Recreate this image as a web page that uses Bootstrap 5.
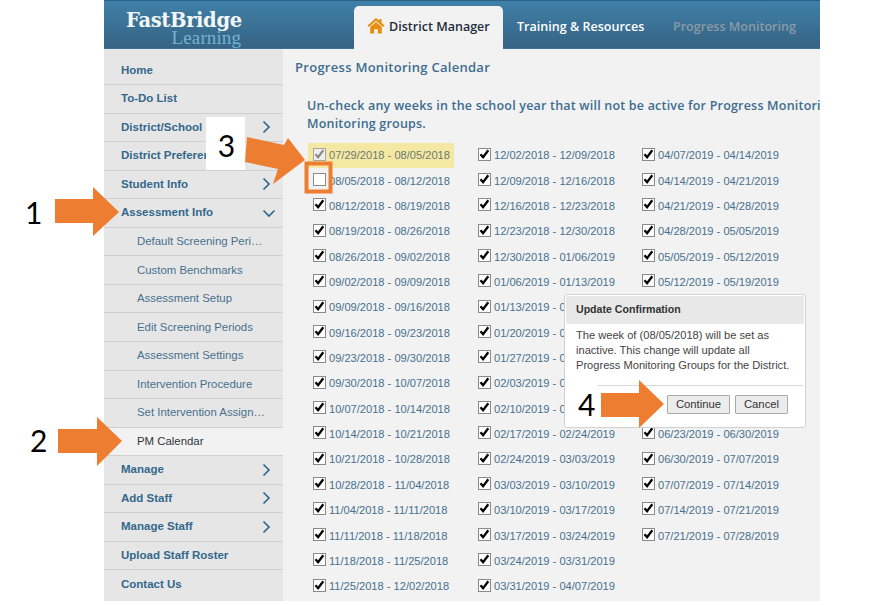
<!DOCTYPE html>
<html lang="en">
<head>
<meta charset="utf-8">
<title>Progress Monitoring Calendar</title>
<link href="https://cdn.jsdelivr.net/npm/bootstrap@5.3.0/dist/css/bootstrap.min.css" rel="stylesheet">
<style>
html,body{background:#fff;margin:0;height:605px;overflow:hidden}
body{font-family:"Liberation Sans",Arial,sans-serif}
.stage{position:relative;width:872px;height:605px;overflow:hidden}
.frame{width:716px;height:601px;margin-left:104px;overflow:hidden;background:#f2f2f2}
.topbar{height:49px;background:linear-gradient(#3f80a8,#366383);border-top:1px solid #2d5f82;border-bottom:1px solid #3b7398}
.logo{width:250px;padding:10px 0 0 22px;line-height:1}
.logo-a{font-family:"DejaVu Serif",serif;font-weight:700;font-size:19.5px;color:#f4f6f7;height:17px;letter-spacing:-.35px;white-space:nowrap}
.logo-b{font-family:"Liberation Serif",serif;font-size:19px;color:#74b2d2;text-align:right;width:115px;letter-spacing:.1px}
.tab-item{font-family:"Open Sans",sans-serif;font-weight:600;font-size:12.5px;letter-spacing:.02px;color:#fff;padding:0 13px;height:42px;margin-top:5px;white-space:nowrap}
.tab-on{background:#f2f2f2;color:#1f2d3d;border-radius:5px 5px 0 0;height:43px;width:149px;flex:none}
.tab-off{color:#8b9aa6;padding-left:14px}
.tab-train{padding-left:14px;width:156px;flex:none}
.house{width:18px;height:17px;margin-right:4px;margin-top:-4px;flex:none}
.sidebar{width:179px;height:552px;background:#e6e6e6;padding-top:7.5px;flex:none}
.navrow{height:28.56px;border-bottom:1.5px solid #cfcfcf;padding:0 13px 0 17px;color:#33688c;font-size:11.5px;font-weight:700;white-space:nowrap}
.navrow:last-child{border-bottom:0}
.navsub{padding-left:33px;font-weight:400;font-size:11.4px;color:#47708e}
.navcur{background:#f2f2f2;color:#2f3640}
.chev{width:9px;height:14px;flex:none;margin-right:-1px}
.chev-d{width:14px;height:9px;margin-right:-6px}
.content{flex:1;padding:0 12px;min-width:0;position:relative}
.title{font-family:"Open Sans",sans-serif;font-weight:600;font-size:13px;color:#3d6d8f;letter-spacing:.28px;margin:9px 0 0;line-height:18px;white-space:nowrap}
.lede{font-family:"Open Sans",sans-serif;font-weight:600;font-size:12.5px;color:#3d6d8f;letter-spacing:.2px;line-height:18px;margin:21px 0 0 12px;width:513px;white-space:nowrap;overflow:hidden}
.weeks{display:grid;grid-auto-flow:column;grid-template-rows:repeat(18,25.35px);grid-template-columns:165px 164px 150px;margin:10px 0 0 13px;white-space:nowrap}
.wk{font-size:11.1px;color:#47708e;height:25.35px;display:flex;align-items:center;gap:3px;padding-left:5px}
.wk-hl{background:#f5e8a3;width:146px;height:25px;color:#6a7a72}
.cb{appearance:none;width:13px;height:13px;margin:-3px 0 0;flex:none;border:1px solid #8a8a8a;background:#fff;border-radius:0;position:relative}
.cb-on{background:#fff url("data:image/svg+xml,%3Csvg xmlns='http://www.w3.org/2000/svg' viewBox='0 0 13 13'%3E%3Cpath d='M2.5 6.2l2.6 3 5.2-7' fill='none' stroke='%23000' stroke-width='2.3'/%3E%3C/svg%3E") center/13px no-repeat}
.cb-dis{border-color:#a6a6a6;background:#eee url("data:image/svg+xml,%3Csvg xmlns='http://www.w3.org/2000/svg' viewBox='0 0 13 13'%3E%3Cpath d='M2.5 6.2l2.6 3 5.2-7' fill='none' stroke='%23888' stroke-width='2.1'/%3E%3C/svg%3E") center/13px no-repeat}
.dialog{position:absolute;left:564px;top:294px;width:242px;height:134px;background:#fff;border:1px solid #d2d2d2;border-radius:3px;padding:1px}
.dlg-head{height:28px;background:#e8e8e8;border-radius:2px;padding:0 10px;font-weight:700;color:#333;font-size:10.6px}
.dlg-body{padding:4px 10px 0;font-size:11.1px;line-height:15px;color:#444;white-space:nowrap}
.dlg-foot{position:absolute;left:33px;right:2px;top:90px;border-top:1px solid #d8d8d8;padding:9px 15px 0 0;gap:5px}
.dlg-btn{font-size:11.3px;line-height:1;padding:0;width:63px;height:19px;border:1px solid #aaa;border-radius:1px;background:#ececec;color:#333}
.dlg-btn2{width:53px}
.marks{position:absolute;left:0;top:0;pointer-events:none}
.tag{position:absolute;font-family:Lato,sans-serif;font-size:30px;line-height:1;color:#000}
.tag-w{left:206px;top:117px;width:39px;height:53px;background:#fff;display:flex;align-items:center;justify-content:center;padding:3px 0 0 2px}
</style>
</head>
<body>
<div class="stage">
  <div class="frame">
    <div class="topbar d-flex">
      <div class="logo">
        <div class="logo-a">FastBridge</div>
        <div class="logo-b">Learning</div>
      </div>
      <div class="tab-item tab-on d-flex align-items-center">
        <svg class="house" viewBox="0 0 18 17"><path d="M9 1L0.5 8.5 2 10l7-6.2 7 6.2 1.5-1.5-3-2.7V2h-2.2v1.8z" fill="#e58e0f"/><path d="M3.2 10L9 5l5.8 5v6.5h-4v-4.3H7.2v4.3h-4z" fill="#e58e0f"/></svg>
        District Manager
      </div>
      <div class="tab-item tab-train d-flex align-items-center">Training &amp; Resources</div>
      <div class="tab-item tab-off d-flex align-items-center">Progress Monitoring</div>
    </div>
    <div class="d-flex">
      <div class="sidebar" id="side"></div>
      <div class="content">
        <h1 class="title">Progress Monitoring Calendar</h1>
        <p class="lede">Un-check any weeks in the school year that will not be active for Progress Monitoring. This will update all Progress<br>Monitoring groups.</p>
        <div class="weeks" id="weeks"></div>
      </div>
    </div>
  </div>

  <div class="dialog">
    <div class="dlg-head d-flex align-items-center">Update Confirmation</div>
    <div class="dlg-body">The week of (08/05/2018) will be set as<br>inactive. This change will update all<br>Progress Monitoring Groups for the District.</div>
    <div class="dlg-foot d-flex justify-content-end">
      <button class="btn dlg-btn" type="button">Continue</button>
      <button class="btn dlg-btn dlg-btn2" type="button">Cancel</button>
    </div>
  </div>

  <svg class="marks" width="872" height="605" viewBox="0 0 872 605">
    <g fill="#ed7d31">
      <path d="M55 199H93V187L119 212 93 236V223H55z"/>
      <path d="M58 429H97V417L122 441 97 466V453H58z"/>
      <path d="M247 137L284 145 288 138 305 160 273 184 278 169 245 162z"/>
      <path d="M601 393H639V380L664 404 639 428V417H601z"/>
    </g>
    <rect x="306.5" y="163.5" width="24" height="28" fill="none" stroke="#ed7d31" stroke-width="4"/>
  </svg>
  <div class="tag" style="left:25px;top:197px">1</div>
  <div class="tag" style="left:30px;top:425px">2</div>
  <div class="tag tag-w">3</div>
  <div class="tag" style="left:578px;top:389px">4</div>
</div>

<script>
var chev='<svg class="chev" viewBox="0 0 9 14"><path d="M1.5 1.5L7 7l-5.5 5.5" fill="none" stroke="#33688c" stroke-width="1.7"/></svg>';
var chevD='<svg class="chev chev-d" viewBox="0 0 14 9"><path d="M1.5 1.5L7 7l5.5-5.5" fill="none" stroke="#33688c" stroke-width="1.7"/></svg>';
var nav=[["Home"],["To-Do List"],["District/School",1],["District Preferences"],["Student Info",1],["Assessment Info",2],
["Default Screening Peri\u2026",0,"navsub"],["Custom Benchmarks",0,"navsub"],["Assessment Setup",0,"navsub"],["Edit Screening Periods",0,"navsub"],["Assessment Settings",0,"navsub"],["Intervention Procedure",0,"navsub"],["Set Intervention Assign\u2026",0,"navsub"],["PM Calendar",0,"navsub navcur"],
["Manage",1],["Add Staff",1],["Manage Staff",1],["Upload Staff Roster"],["Contact Us"]];
document.getElementById('side').innerHTML=nav.map(function(n){
 return '<div class="navrow d-flex align-items-center justify-content-between '+(n[2]||'')+'"><span>'+n[0]+'</span>'+(n[1]==1?chev:n[1]==2?chevD:'')+'</div>';
}).join('');
var d=["07/29/2018","08/05/2018","08/12/2018","08/19/2018","08/26/2018","09/02/2018","09/09/2018","09/16/2018","09/23/2018","09/30/2018","10/07/2018","10/14/2018","10/21/2018","10/28/2018","11/04/2018","11/11/2018","11/18/2018","11/25/2018","12/02/2018","12/09/2018","12/16/2018","12/23/2018","12/30/2018","01/06/2019","01/13/2019","01/20/2019","01/27/2019","02/03/2019","02/10/2019","02/17/2019","02/24/2019","03/03/2019","03/10/2019","03/17/2019","03/24/2019","03/31/2019","04/07/2019","04/14/2019","04/21/2019","04/28/2019","05/05/2019","05/12/2019","05/19/2019","05/26/2019","06/02/2019","06/09/2019","06/16/2019","06/23/2019","06/30/2019","07/07/2019","07/14/2019","07/21/2019","07/28/2019"];
var h='';
for(var i=0;i<d.length-1;i++){
 var cls=i==0?'cb cb-dis':i==1?'cb':'cb cb-on';
 h+='<label class="wk'+(i==0?' wk-hl':'')+'"><input type="checkbox" class="'+cls+'"'+(i>1?' checked':'')+'>'+d[i]+' - '+d[i+1]+'</label>';
}
document.getElementById('weeks').innerHTML=h;
</script>
<script src="https://cdn.jsdelivr.net/npm/bootstrap@5.3.0/dist/js/bootstrap.bundle.min.js"></script>
</body>
</html>
